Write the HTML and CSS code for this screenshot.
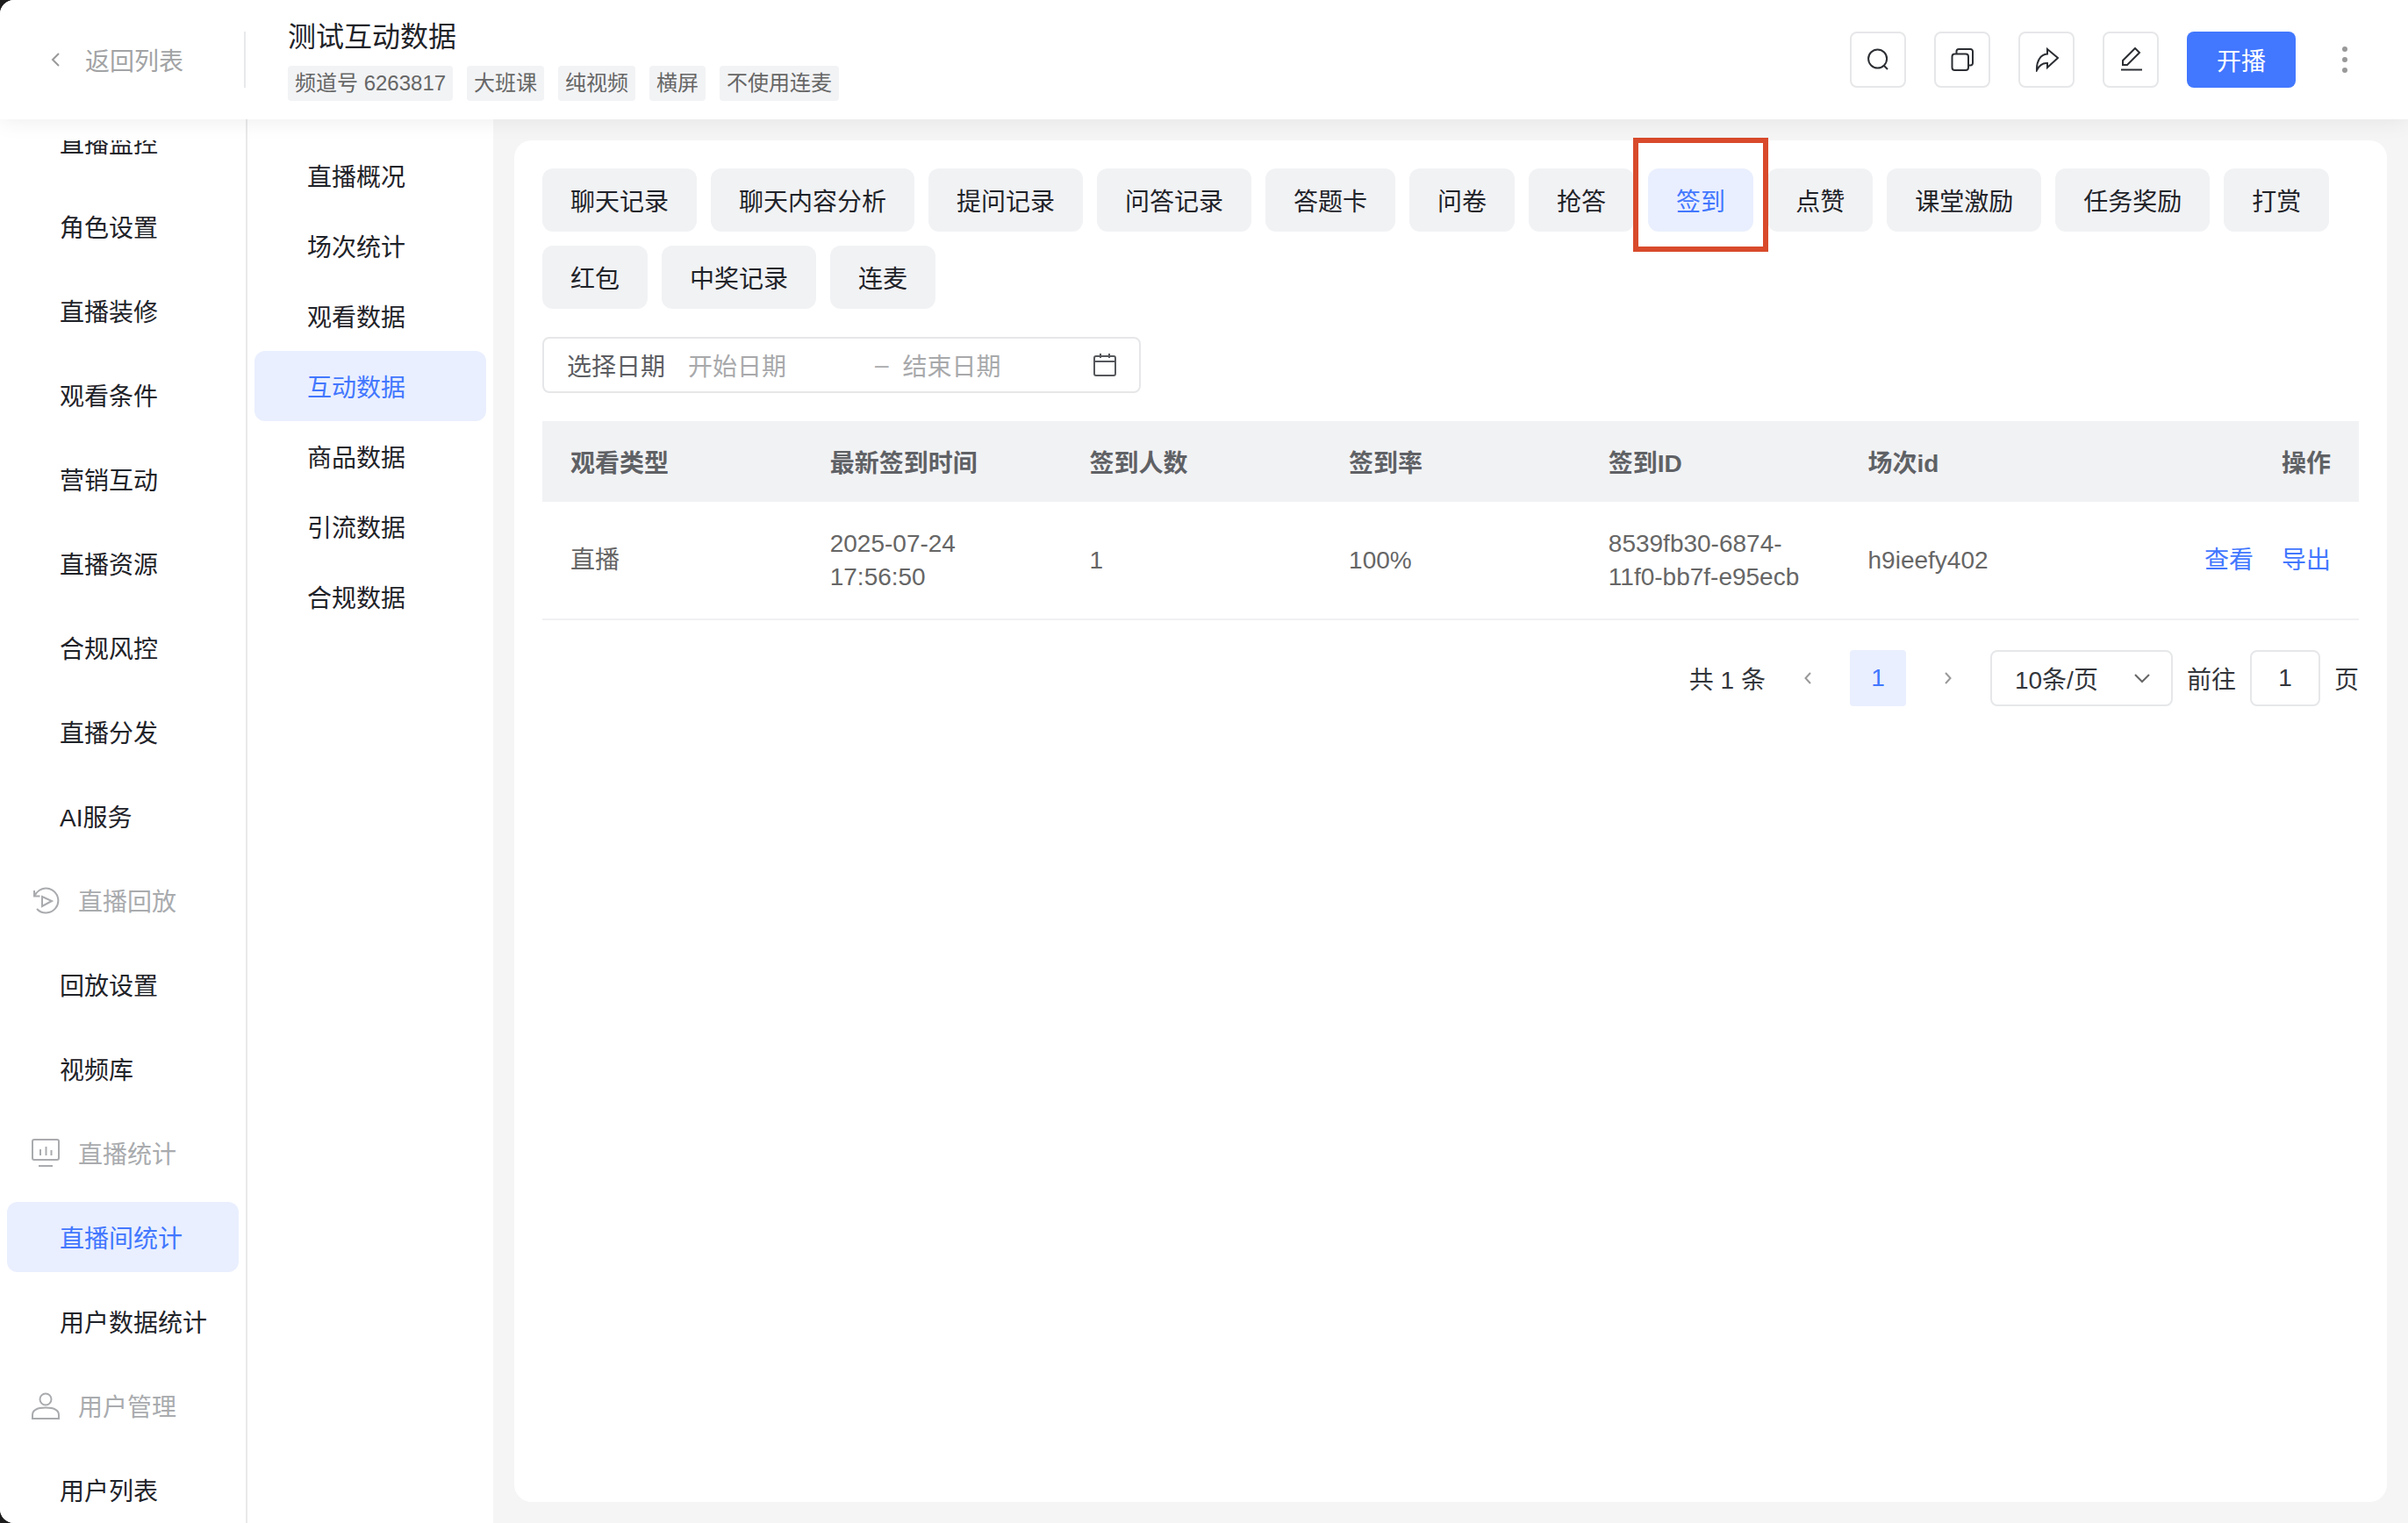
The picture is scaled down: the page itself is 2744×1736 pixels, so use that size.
FILE: index.html
```html
<!DOCTYPE html>
<html lang="zh-CN">
<head>
    <meta charset="UTF-8">
    <meta name="viewport" content="width=device-width, initial-scale=1.0">
    <title>互动数据</title>
    <link rel="stylesheet" href="styles.css">
</head>
<body>
<div class="app">
    <header class="topbar">
        <div class="back">
            <svg class="back-arrow" width="10" height="16" viewBox="0 0 10 16"><path d="M9 1L2 8l7 7"/></svg>
            <span>返回列表</span>
        </div>
        <div class="title-block">
            <div class="title">测试互动数据</div>
            <div class="tags">
                <span class="tag">频道号 6263817</span>
                <span class="tag">大班课</span>
                <span class="tag">纯视频</span>
                <span class="tag">横屏</span>
                <span class="tag">不使用连麦</span>
            </div>
        </div>
        <div class="actions">
            <button class="icon-btn"><svg width="28" height="28" viewBox="0 0 28 28"><circle cx="13.6" cy="13" r="10.5"/><path d="M21 21l4 4"/></svg></button>
            <button class="icon-btn"><svg width="28" height="28" viewBox="0 0 28 28"><rect x="2.5" y="7.5" width="18.5" height="18.5" rx="3"/><path d="M7.5 7V4.5a2.5 2.5 0 0 1 2.5-2.5h13.5a2.5 2.5 0 0 1 2.5 2.5V18a2.5 2.5 0 0 1-2.5 2.5H21"/></svg></button>
            <button class="icon-btn"><svg width="28" height="28" viewBox="0 0 28 28"><path d="M15 2l12 10-12 11v-5C10 17.500 6 20 3 26 2.500 16 7 8 15 7.500z"/></svg></button>
            <button class="icon-btn"><svg width="28" height="28" viewBox="0 0 28 28"><path d="M5 20h5L24 6l-5-5L5 15z"/><path d="M3 25.500h24"/></svg></button>
            <button class="start-btn">开播</button>
            <div class="kebab"><i></i><i></i><i></i></div>
        </div>
    </header>

    <div class="layout">
        <aside class="sidebar">
            <div class="side-scroll">
                <a class="side-item">直播监控</a>
                <a class="side-item">角色设置</a>
                <a class="side-item">直播装修</a>
                <a class="side-item">观看条件</a>
                <a class="side-item">营销互动</a>
                <a class="side-item">直播资源</a>
                <a class="side-item">合规风控</a>
                <a class="side-item">直播分发</a>
                <a class="side-item">AI服务</a>
                <div class="side-group">
                    <svg width="32" height="32" viewBox="0 0 32 32"><path d="M3.500 11A14 14 0 1 1 6 26"/><path d="M3 5v6.500h6.500"/><path d="M12 12l11 5-11 6z"/></svg>
                    <span>直播回放</span>
                </div>
                <a class="side-item">回放设置</a>
                <a class="side-item">视频库</a>
                <div class="side-group">
                    <svg width="32" height="32" viewBox="0 0 32 32"><rect x="1" y="1" width="30" height="23" rx="2"/><path d="M10 12v7M16.500 9v10M22.500 13v6M8 31h16"/></svg>
                    <span>直播统计</span>
                </div>
                <a class="side-item active">直播间统计</a>
                <a class="side-item">用户数据统计</a>
                <div class="side-group">
                    <svg width="32" height="32" viewBox="0 0 32 32"><circle cx="16" cy="9" r="6.500"/><path d="M1 31v-4c0-6 6-8.500 15-8.500S31 21 31 27v4z"/></svg>
                    <span>用户管理</span>
                </div>
                <a class="side-item">用户列表</a>
            </div>
        </aside>

        <nav class="subnav">
            <a class="sub-item">直播概况</a>
            <a class="sub-item">场次统计</a>
            <a class="sub-item">观看数据</a>
            <a class="sub-item active">互动数据</a>
            <a class="sub-item">商品数据</a>
            <a class="sub-item">引流数据</a>
            <a class="sub-item">合规数据</a>
        </nav>

        <main class="content">
            <section class="card">
                <div class="tabs">
                    <span class="tab">聊天记录</span>
                    <span class="tab">聊天内容分析</span>
                    <span class="tab">提问记录</span>
                    <span class="tab">问答记录</span>
                    <span class="tab">答题卡</span>
                    <span class="tab">问卷</span>
                    <span class="tab">抢答</span>
                    <span class="tab active marked">签到</span>
                    <span class="tab">点赞</span>
                    <span class="tab">课堂激励</span>
                    <span class="tab">任务奖励</span>
                    <span class="tab">打赏</span>
                    <span class="tab">红包</span>
                    <span class="tab">中奖记录</span>
                    <span class="tab">连麦</span>
                </div>

                <div class="date-range">
                    <span class="date-label">选择日期</span>
                    <span class="date-start">开始日期</span>
                    <span class="date-dash">–</span>
                    <span class="date-end">结束日期</span>
                    <svg class="date-icon" width="26" height="26" viewBox="0 0 26 26"><rect x="1" y="3" width="24" height="22" rx="2"/><path d="M1 9h24M8 0v5M18 0v5"/></svg>
                </div>

                <table class="data-table">
                    <thead>
                        <tr>
                            <th>观看类型</th>
                            <th>最新签到时间</th>
                            <th>签到人数</th>
                            <th>签到率</th>
                            <th>签到ID</th>
                            <th>场次id</th>
                            <th class="op">操作</th>
                        </tr>
                    </thead>
                    <tbody>
                        <tr>
                            <td>直播</td>
                            <td>2025-07-24 17:56:50</td>
                            <td>1</td>
                            <td>100%</td>
                            <td>8539fb30-6874-11f0-bb7f-e95ecb</td>
                            <td>h9ieefy402</td>
                            <td class="op"><a class="link">查看</a><a class="link">导出</a></td>
                        </tr>
                    </tbody>
                </table>

                <div class="pager">
                    <span>共 1 条</span>
                    <span class="page-arrow"><svg width="8" height="14" viewBox="0 0 8 14"><path d="M7 1L1.500 7 7 13"/></svg></span>
                    <span class="page-num">1</span>
                    <span class="page-arrow"><svg width="8" height="14" viewBox="0 0 8 14"><path d="M1 1l5.500 6L1 13"/></svg></span>
                    <div class="page-size">
                        <span>10条/页</span>
                        <svg width="18" height="11" viewBox="0 0 18 11"><path d="M1 1l8 8 8-8"/></svg>
                    </div>
                    <span>前往</span>
                    <div class="page-input">1</div>
                    <span>页</span>
                </div>
            </section>
        </main>
    </div>
</div>
</body>
</html>
```

FILE: styles.css
```css
* {
    box-sizing: border-box;
}
html, body {
    margin: 0;
    height: 100%;
    overflow: hidden;
    background: #1c1c1c;
}
body {
    font-family: "Liberation Sans", "Noto Sans CJK SC", sans-serif;
    font-size: 28px;
    color: #1f2329;
}
svg {
    fill: none;
    stroke: currentColor;
    stroke-width: 2;
    display: block;
}

.app {
    height: 100%;
    display: flex;
    flex-direction: column;
    background: #fff;
    border-radius: 16px 0 0 16px;
    overflow: hidden;
}

/* top bar */
.topbar {
    height: 136px;
    flex: none;
    display: flex;
    align-items: center;
    background: #fff;
    box-shadow: 0 2px 24px rgba(0, 0, 0, 0.07);
    position: relative;
    z-index: 2;
}
.back {
    width: 280px;
    height: 64px;
    padding-left: 58px;
    display: flex;
    align-items: center;
    gap: 29px;
    color: #a2a3a5;
    border-right: 2px solid #e8e9eb;
}
.back-arrow {
    color: #999;
}
.title-block {
    margin-left: 48px;
}
.title {
    font-size: 32px;
    line-height: 44px;
    margin-top: -2px;
    margin-bottom: 11px;
}
.tags {
    display: flex;
    gap: 16px;
}
.tag {
    height: 40px;
    line-height: 40px;
    padding: 0 8px;
    font-size: 24px;
    color: #666;
    background: #f2f3f5;
    border-radius: 4px;
}
.actions {
    margin-left: auto;
    padding-right: 60px;
    display: flex;
    align-items: center;
    gap: 32px;
}
.icon-btn {
    width: 64px;
    height: 64px;
    padding: 0;
    display: flex;
    align-items: center;
    justify-content: center;
    background: #fff;
    border: 2px solid #e6e7e9;
    border-radius: 8px;
    color: #2b2e33;
}
.start-btn {
    width: 124px;
    height: 64px;
    padding: 0;
    font: inherit;
    color: #fff;
    background: #4277ff;
    border: none;
    border-radius: 8px;
}
.kebab {
    width: 24px;
    margin-left: 12px;
    display: flex;
    flex-direction: column;
    align-items: center;
    gap: 6px;
}
.kebab i {
    width: 6px;
    height: 6px;
    border-radius: 50%;
    background: #999;
}

/* columns under the bar */
.layout {
    flex: 1;
    min-height: 0;
    display: flex;
}
.sidebar {
    width: 282px;
    flex: none;
    padding-top: 24px;
    border-right: 2px solid #e8e9eb;
    background: #fff;
}
.side-scroll {
    height: 100%;
    overflow: hidden;
    padding: 0 8px;
    display: flex;
    flex-direction: column;
    gap: 16px;
}
.side-item, .side-group {
    height: 80px;
    flex: none;
    display: flex;
    align-items: center;
    border-radius: 12px;
}
.side-item {
    padding-left: 60px;
}
.side-item:first-child {
    margin-top: -38px;
}
.side-item.active {
    color: #4277ff;
    background: #e9effe;
}
.side-group {
    padding-left: 28px;
    gap: 21px;
    color: #a9abae;
}
.subnav {
    width: 280px;
    flex: none;
    padding: 24px 8px 0;
    background: #fff;
}
.sub-item {
    height: 80px;
    padding-left: 60px;
    display: flex;
    align-items: center;
    border-radius: 12px;
}
.sub-item.active {
    color: #4277ff;
    background: #e9effe;
}

/* main card */
.content {
    flex: 1;
    min-width: 0;
    padding: 24px;
    background: #f5f5f6;
}
.card {
    height: 100%;
    padding: 32px;
    background: #fff;
    border-radius: 20px;
}
.tabs {
    display: flex;
    flex-wrap: wrap;
    gap: 16px;
}
.tab {
    height: 72px;
    padding: 0 32px;
    display: flex;
    align-items: center;
    background: #f1f2f4;
    border-radius: 12px;
}
.tab.active {
    color: #4277ff;
    background: #e9effe;
}
.tab.marked {
    position: relative;
}
.tab.marked::after {
    content: "";
    position: absolute;
    top: -35px;
    right: -17px;
    bottom: -23px;
    left: -17px;
    border: 6px solid #d84a2b;
}

.date-range {
    width: 682px;
    height: 64px;
    margin-top: 32px;
    padding: 0 26px;
    display: flex;
    align-items: center;
    border: 2px solid #e6e7e9;
    border-radius: 8px;
    color: #a8a9ab;
}
.date-label {
    color: #5c5e62;
    margin-right: 26px;
}
.date-dash {
    margin-left: 101px;
    margin-right: 16px;
}
.date-icon {
    margin-left: auto;
    color: #55575b;
}

.data-table {
    width: 100%;
    margin-top: 32px;
    border-collapse: collapse;
    table-layout: fixed;
    color: #666;
}
.data-table th {
    height: 92px;
    padding: 0 32px;
    text-align: left;
    font-weight: 600;
    color: #5f6165;
    background: #f1f2f4;
}
.data-table td {
    height: 134px;
    padding: 0 32px;
    line-height: 38px;
    border-bottom: 2px solid #f0f1f3;
}
.data-table .op {
    text-align: right;
}
.link {
    color: #4277ff;
    margin-left: 32px;
}

.pager {
    margin-top: 34px;
    display: flex;
    justify-content: flex-end;
    align-items: center;
    gap: 16px;
    color: #33363b;
}
.page-arrow {
    width: 64px;
    height: 64px;
    display: flex;
    align-items: center;
    justify-content: center;
    color: #999;
}
.page-num {
    width: 64px;
    height: 64px;
    line-height: 64px;
    text-align: center;
    color: #4277ff;
    background: #e9effe;
    border-radius: 4px;
}
.page-size {
    width: 208px;
    height: 64px;
    padding: 0 24px 0 26px;
    display: flex;
    align-items: center;
    justify-content: space-between;
    border: 2px solid #e6e7e9;
    border-radius: 8px;
}
.page-size svg {
    color: #666;
}
.page-input {
    width: 80px;
    height: 64px;
    line-height: 60px;
    text-align: center;
    border: 2px solid #e6e7e9;
    border-radius: 8px;
}
```
